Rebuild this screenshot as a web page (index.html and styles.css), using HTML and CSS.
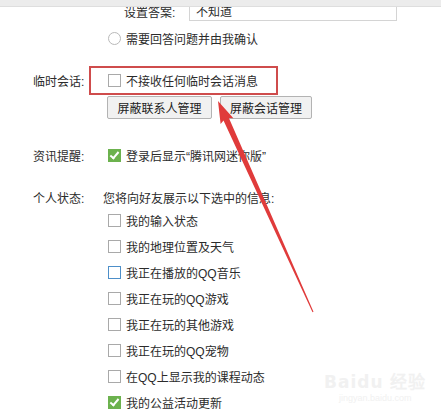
FILE: index.html
```html
<!DOCTYPE html>
<html lang="zh-CN">
<head>
    <meta charset="UTF-8">
    <title>QQ 设置 - 权限设置</title>
    <link rel="stylesheet" href="styles.css">
</head>
<body>
    <div class="topbar"></div>

    <div class="settings">
        <div class="answer-row">
            <span class="answer-label">设置答案:</span>
            <input type="text" class="answer-input" value="不知道">
        </div>

        <div class="option radio-option">
            <span class="radio"></span>
            <span>需要回答问题并由我确认</span>
        </div>

        <div class="row temp-row">
            <span class="label">临时会话:</span>
            <div class="highlight">
                <span class="box"></span>
                <span>不接收任何临时会话消息</span>
            </div>
        </div>
        <div class="buttons">
            <button type="button" class="button">屏蔽联系人管理</button>
            <button type="button" class="button">屏蔽会话管理</button>
        </div>

        <div class="row news-row">
            <span class="label">资讯提醒:</span>
            <div class="option inline">
                <span class="box checked"></span>
                <span>登录后显示“腾讯网迷你版”</span>
            </div>
        </div>

        <div class="row status-row">
            <span class="label">个人状态:</span>
            <span>您将向好友展示以下选中的信息:</span>
        </div>
        <div class="option"><span class="box"></span><span>我的输入状态</span></div>
        <div class="option"><span class="box"></span><span>我的地理位置及天气</span></div>
        <div class="option"><span class="box hover"></span><span>我正在播放的QQ音乐</span></div>
        <div class="option"><span class="box"></span><span>我正在玩的QQ游戏</span></div>
        <div class="option"><span class="box"></span><span>我正在玩的其他游戏</span></div>
        <div class="option"><span class="box"></span><span>我正在玩的QQ宠物</span></div>
        <div class="option"><span class="box"></span><span>在QQ上显示我的课程动态</span></div>
        <div class="option"><span class="box checked"></span><span>我的公益活动更新</span></div>
    </div>

    <div class="watermark">
        <div class="wm-logo">Bai<span class="wm-du">du</span> 经验</div>
        <div class="wm-url">jingyan.baidu.com</div>
    </div>

    <svg class="arrow" width="441" height="411" viewBox="0 0 441 411">
        <polygon points="218,101 233.4,118.2 228.9,118.1 313.5,311.8 312.5,312.2 223.5,120.5 220.6,124" fill="#e03b3b"/>
    </svg>
</body>
</html>
```

FILE: styles.css
```css
body {
    margin: 0;
    font-family: 'Liberation Sans', 'Noto Sans CJK SC', sans-serif;
    font-size: 12px;
    color: #2b2b2b;
    background-color: white;
    position: relative;
    height: 411px;
    overflow: hidden;
}

.topbar {
    position: absolute;
    top: 0;
    left: 0;
    right: 0;
    height: 6px;
    background-color: #ececec;
    border-bottom: 1px solid #dedede;
    z-index: 2;
}

.settings {
    margin-top: -3px;
}

.answer-row {
    display: flex;
    align-items: flex-start;
    padding-left: 124px;
    height: 24px;
}

.answer-label {
    width: 65px;
    line-height: 16px;
    margin-top: 8px;
}

.answer-input {
    width: 208px;
    height: 24px;
    box-sizing: border-box;
    border: 1px solid #d4d4d4;
    padding: 3px 6px 0;
    font: inherit;
    line-height: 16px;
    color: #2b2b2b;
    outline: none;
}

.option {
    display: flex;
    align-items: center;
    height: 26px;
    padding-left: 108px;
    gap: 5px;
}

.option.inline {
    padding-left: 5px;
}

.radio-option {
    margin-top: 4px;
}

.radio {
    width: 11px;
    height: 11px;
    border: 1px solid #b9b9b9;
    border-radius: 50%;
    background-color: white;
}

.box {
    width: 11px;
    height: 11px;
    border: 1px solid #a9a9a9;
    background-color: white;
    flex-shrink: 0;
    position: relative;
}

.box.hover {
    border-color: #4d8fc9;
}

.box.checked {
    width: 13px;
    height: 13px;
    border: none;
    background-color: #6cb24e;
}

.box.checked::after {
    content: '';
    position: absolute;
    left: 4px;
    top: 1px;
    width: 3px;
    height: 7px;
    border-right: 2px solid white;
    border-bottom: 2px solid white;
    transform: rotate(40deg);
}

.row {
    display: flex;
    align-items: center;
    padding-left: 33px;
}

.label {
    width: 70px;
    flex-shrink: 0;
}

.temp-row {
    margin-top: 15px;
}

.highlight {
    display: flex;
    align-items: center;
    gap: 5px;
    margin-left: -14px;
    width: 168px;
    height: 25px;
    padding-left: 17px;
    border: 2px solid #cf4c4c;
}

.buttons {
    display: flex;
    gap: 8px;
    padding-left: 107px;
    margin-top: 1px;
}

.button {
    height: 23px;
    padding: 0;
    white-space: nowrap;
    font: inherit;
    color: #222;
    background-color: #f1f1f1;
    border: 1px solid #b3b3b3;
    border-radius: 2px;
}

.button:first-child {
    width: 105px;
}

.button:last-child {
    width: 92px;
}

.news-row {
    margin-top: 23px;
    height: 26px;
}

.status-row {
    margin-top: 19px;
    height: 20px;
}

.watermark {
    position: absolute;
    left: 324px;
    top: 372px;
    color: #f1f1f1;
    text-align: center;
}

.wm-logo {
    font-family: 'DejaVu Sans', sans-serif;
    font-size: 17px;
    font-weight: bold;
    line-height: 20px;
    letter-spacing: 1px;
}

.wm-url {
    font-size: 9px;
    line-height: 12px;
}

.arrow {
    position: absolute;
    top: 0;
    left: 0;
    z-index: 3;
}
```
